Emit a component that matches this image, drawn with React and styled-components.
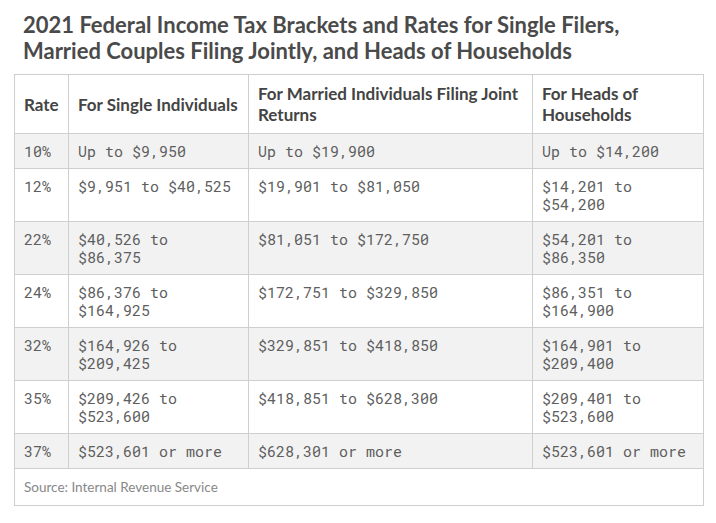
import React from "react";
import styled, { createGlobalStyle } from "styled-components";

const rows = [
  ["10%", "Up to $9,950", "Up to $19,900", "Up to $14,200"],
  ["12%", "$9,951 to $40,525", "$19,901 to $81,050", "$14,201 to $54,200"],
  ["22%", "$40,526 to $86,375", "$81,051 to $172,750", "$54,201 to $86,350"],
  ["24%", "$86,376 to $164,925", "$172,751 to $329,850", "$86,351 to $164,900"],
  ["32%", "$164,926 to $209,425", "$329,851 to $418,850", "$164,901 to $209,400"],
  ["35%", "$209,426 to $523,600", "$418,851 to $628,300", "$209,401 to $523,600"],
  ["37%", "$523,601 or more", "$628,301 or more", "$523,601 or more"],
];

const App = () => {
  return (
    <>
      <GlobalStyle />
      <Page>
        <Title>
          2021 Federal Income Tax Brackets and Rates for Single Filers,
          Married Couples Filing Jointly, and Heads of Households
        </Title>
        <Table>
          <colgroup>
            <col style={{ width: 54 }} />
            <col style={{ width: 180 }} />
            <col style={{ width: 284 }} />
            <col style={{ width: 171 }} />
          </colgroup>
          <thead>
            <tr>
              <HeadCell>Rate</HeadCell>
              <HeadCell>For Single Individuals</HeadCell>
              <HeadCell>For Married Individuals Filing Joint Returns</HeadCell>
              <HeadCell>For Heads of Households</HeadCell>
            </tr>
          </thead>
          <tbody>
            {rows.map((row, i) => (
              <Row key={row[0]} $striped={i % 2 === 0}>
                {row.map((value, j) => (
                  <Cell key={j}>{value}</Cell>
                ))}
              </Row>
            ))}
          </tbody>
          <tfoot>
            <tr>
              <SourceCell colSpan={4}>Source: Internal Revenue Service</SourceCell>
            </tr>
          </tfoot>
        </Table>
      </Page>
    </>
  );
};

export default App;

const GlobalStyle = createGlobalStyle`
  body {
    margin: 0;
    background: #fff;
    font-family: Lato, "Open Sans", sans-serif;
  }
`;

const Page = styled.div`
  width: 716px;
  padding: 12px 0 0 14px;
  box-sizing: border-box;
`;

const Title = styled.h2`
  margin: 0 0 10px 9px;
  font-family: Lato, sans-serif;
  font-size: 22px;
  line-height: 26px;
  font-weight: 700;
  color: #4a4a4a;
  width: 660px;
`;

const Table = styled.table`
  border-collapse: collapse;
  table-layout: fixed;
  width: 690px;
  border: 1px solid #cfcfcf;
`;

const HeadCell = styled.th`
  border: 1px solid #cfcfcf;
  padding: 8px 7px 8px 9px;
  text-align: left;
  vertical-align: middle;
  font-family: Lato, sans-serif;
  font-weight: 700;
  font-size: 17px;
  line-height: 21px;
  color: #444;
`;

const Row = styled.tr`
  background: ${(p) => (p.$striped ? "#f2f2f2" : "#fff")};
`;

const Cell = styled.td`
  border: 1px solid #cfcfcf;
  padding: 8px 9px;
  vertical-align: top;
  font-family: "Roboto Mono", "DejaVu Sans Mono", monospace;
  font-size: 15px;
  line-height: 18px;
  color: #5e5e5e;
`;

const SourceCell = styled.td`
  border: 1px solid #cfcfcf;
  padding: 9px 9px;
  font-family: Lato, sans-serif;
  font-size: 13.5px;
  line-height: 18px;
  color: #888;
`;
